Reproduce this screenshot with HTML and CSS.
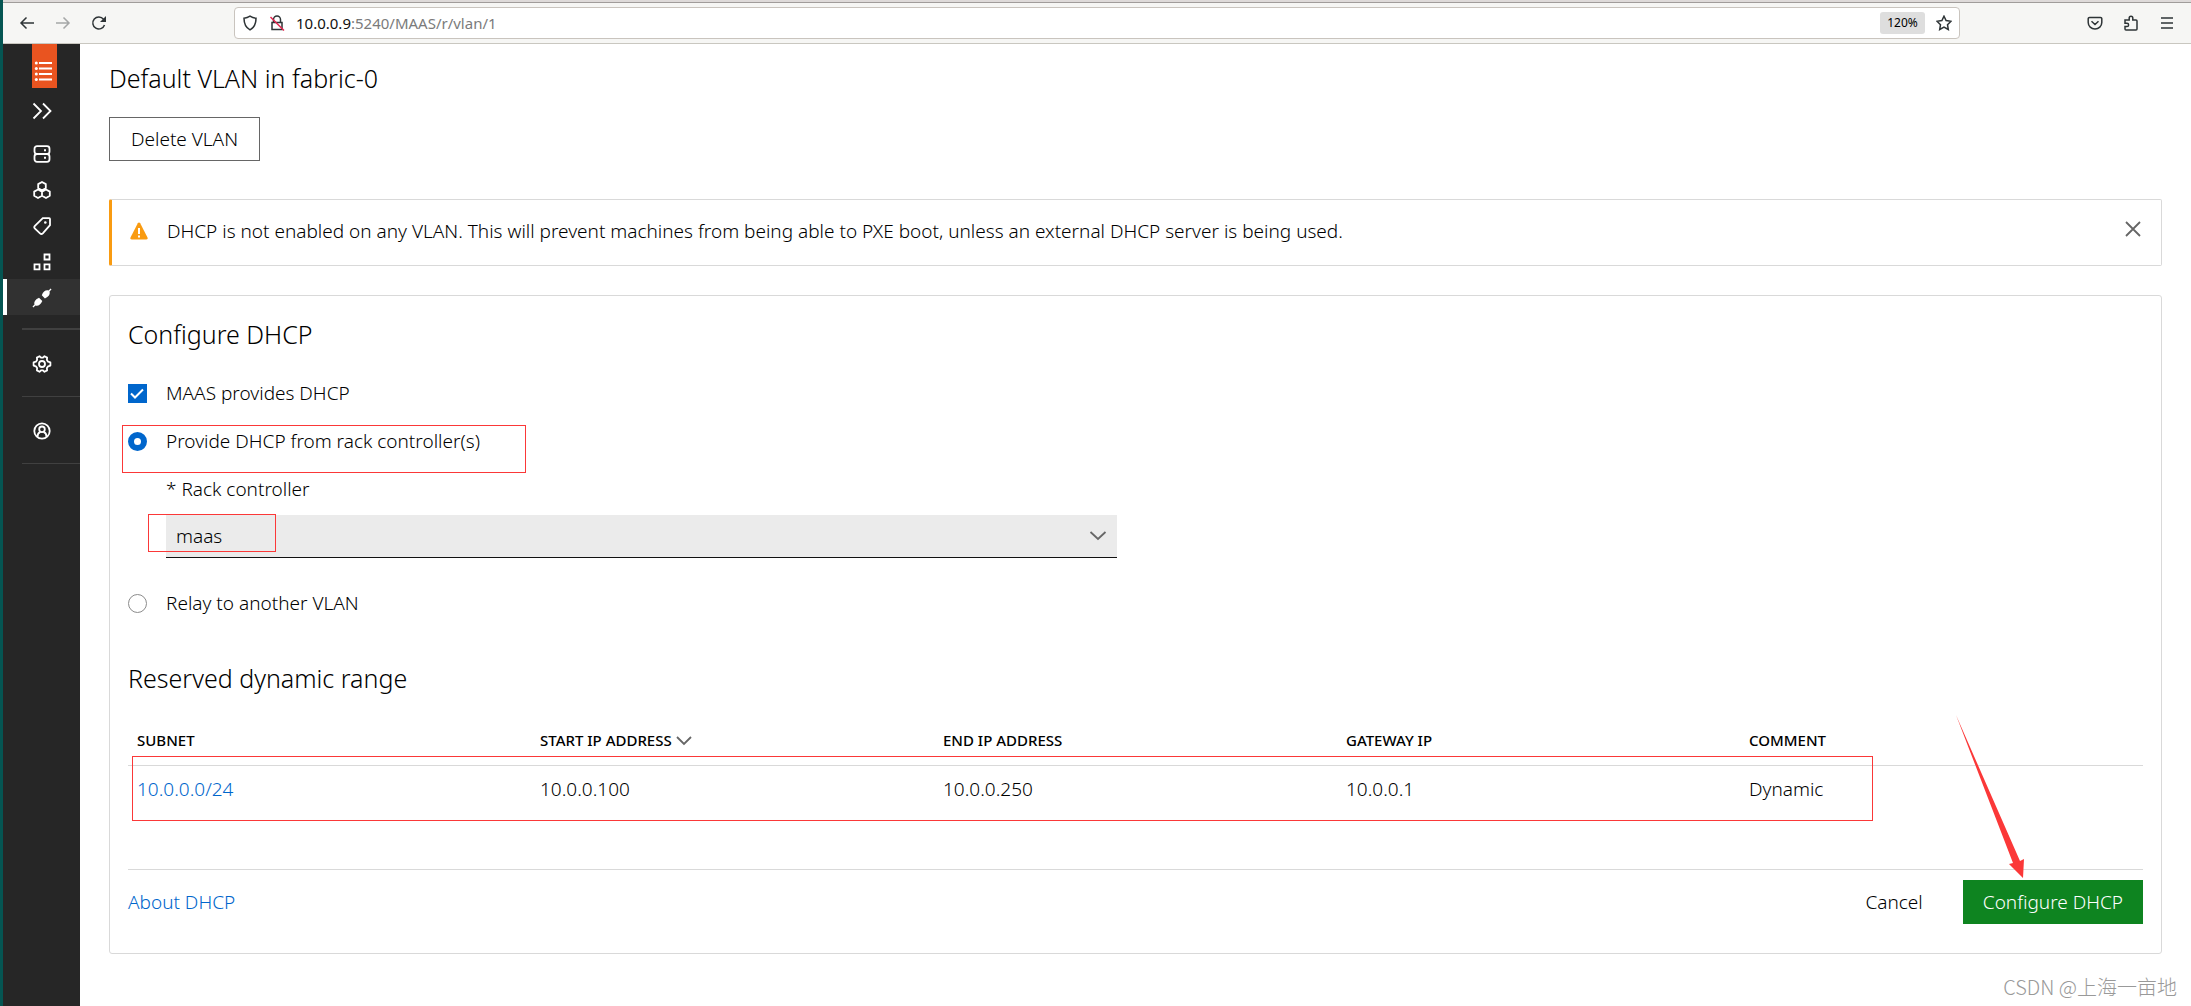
FILE: index.html
```html
<!DOCTYPE html>
<html lang="en">
<head>
<meta charset="utf-8">
<meta name="viewport" content="width=device-width, initial-scale=1">
<title>Default VLAN in fabric-0 | MAAS</title>
<link rel="stylesheet" href="styles.css">
</head>
<body>
<div class="browser">
  <header class="toolbar">
    <div class="toolbar-nav">
      <button class="tool" aria-label="Back"><svg width="16" height="16" viewBox="0 0 16 16"><path d="M15 8H2M7.500 2.500 2 8l5.500 5.500"/></svg></button>
      <button class="tool is-dim" aria-label="Forward" disabled><svg width="16" height="16" viewBox="0 0 16 16"><path d="M1 8h13M8.500 2.500 14 8l-5.500 5.500"/></svg></button>
      <button class="tool" aria-label="Reload"><svg width="16" height="16" viewBox="0 0 16 16"><path d="M13.500 10A6 6 0 1 1 12.500 4.200"/><path class="solid" d="M15 1v6H9z"/></svg></button>
    </div>
    <div class="urlbar">
      <svg width="16" height="16" viewBox="0 0 16 16"><path d="M8 1.200c1.800 1.200 3.600 1.800 6 2 0 5-1.400 9.200-6 11.600C3.400 12.400 2 8.200 2 3.200c2.400-.2 4.200-.8 6-2z"/></svg>
      <svg width="16" height="16" viewBox="0 0 16 16"><path d="M4.500 7V4.500a3.500 3.500 0 0 1 7 0V7M3 7.500h10v7H3z"/><path class="slash" d="M1.500 2 15 15.500"/></svg>
      <p class="url"><b>10.0.0.9</b>:5240/MAAS/r/vlan/1</p>
      <button class="zoom-level">120%</button>
      <button class="tool" aria-label="Bookmark this page"><svg width="16" height="16" viewBox="0 0 16 16"><path d="m8 1.200 2.100 4.400 4.900.7-3.500 3.400.8 4.800L8 12.200l-4.300 2.300.8-4.800L1 6.300l4.900-.7z"/></svg></button>
    </div>
    <div class="toolbar-menu">
      <button class="tool" aria-label="Save to Pocket"><svg width="16" height="16" viewBox="0 0 16 16"><path d="M2.500 2.500h11a1.300 1.300 0 0 1 1.300 1.300v3.700a6.800 6.500 0 0 1-13.600 0V3.800a1.300 1.300 0 0 1 1.300-1.300zM4.500 6.200 8 9.500l3.500-3.300"/></svg></button>
      <button class="tool" aria-label="Extensions"><svg width="16" height="16" viewBox="0 0 16 16"><path d="M2 5h4.200V3a1.700 1.700 0 0 1 3.600 0v2H13a1 1 0 0 1 1 1v8a1 1 0 0 1-1 1H3a1 1 0 0 1-1-1v-2.500h2a1.600 1.600 0 0 0 0-3.200H2z"/></svg></button>
      <button class="tool" aria-label="Open menu"><svg width="16" height="16" viewBox="0 0 16 16"><path d="M2 3h12M2 8h12M2 13h12"/></svg></button>
    </div>
  </header>

  <div class="app">
    <nav class="sidebar" aria-label="Main">
      <a class="logo" href="#" aria-label="MAAS"><svg width="25" height="44" viewBox="0 0 25 44"><g fill="#fff"><path d="M7 18h13v2H7zM7 23.500h13v2H7zM7 29h13v2H7zM7 34.500h13v2H7z"/><circle cx="4.300" cy="19" r="1.500"/><circle cx="4.300" cy="24.500" r="1.500"/><circle cx="4.300" cy="30" r="1.500"/><circle cx="4.300" cy="35.500" r="1.500"/></g></svg></a>
      <button class="nav-toggle" aria-label="Expand navigation"><svg width="20" height="18" viewBox="0 0 20 18"><path d="m1.500 1.500 7.500 7.500-7.500 7.500M11 1.500 18.500 9 11 16.500"/></svg></button>
      <ul class="nav-list">
        <li><a href="#" aria-label="Machines"><svg width="18" height="18" viewBox="0 0 18 18"><rect x="1.500" y="1.200" width="15" height="7.800" rx="2.500"/><rect x="1.500" y="9" width="15" height="7.800" rx="2.500"/><path class="solid" d="M11 4.200h2v2h-2zM11 11.800h2v2h-2z"/></svg></a></li>
        <li><a href="#" aria-label="Devices"><svg width="18" height="18" viewBox="0 0 18 18"><path d="M9 1 12.800 3.100v4.200L9 9.300 5.200 7.300V3.100zM5 8.500 9 10.600v4.200L5 17 1.200 14.800v-4.200zM13 8.500 9 10.600v4.200L13 17l3.800-2.200v-4.200z" stroke-linejoin="round"/></svg></a></li>
        <li><a href="#" aria-label="Tags"><svg width="18" height="18" viewBox="0 0 18 18"><path d="M9.800 1.200h6.400a.8.800 0 0 1 .8.800v6.200l-7.200 8.100a2 2 0 0 1-2.800.1l-5-4.700a2 2 0 0 1-.1-2.800z"/><circle class="solid" cx="12.300" cy="5.500" r="1.300"/></svg></a></li>
        <li><a href="#" aria-label="Pools"><svg width="18" height="18" viewBox="0 0 18 18"><path d="M11.500 1.500h5v5h-5zM11.500 11.300h5v5h-5zM1.500 11.300h5v5h-5z"/></svg></a></li>
        <li><a class="is-active" href="#" aria-label="Networking" aria-current="page"><svg width="20" height="20" viewBox="0 0 20 20"><path class="solid" d="m18.600.5.900.9-2 2.100c.9 2.700-.9 5.400-4.600 6.900L9.800 7.200C11.200 3.400 13.800 1.700 16.600 2.500zM1.400 19.500l-.9-.9 2-2.100c-.8-2.700.9-5.200 4.500-6.800l3.300 3.200c-1.500 3.700-4.200 5.400-6.900 4.600z"/></svg></a></li>
      </ul>
      <ul class="nav-list nav-group is-first">
        <li><a href="#" aria-label="Settings"><svg width="20" height="20" viewBox="0 0 20 20"><path d="M7.500 2.200 9 3.700h2l1.500-1.500 2.600 1.400-.2 2.300 1.200 1.800 2.300.7v3.200l-2.300.7-1.200 1.800.2 2.300-2.600 1.400-1.500-1.500H9l-1.500 1.500-2.600-1.400.2-2.300-1.200-1.800-2.300-.7V8.400l2.300-.7 1.200-1.800-.2-2.300z" stroke-linejoin="round"/><circle cx="10" cy="10" r="3"/></svg></a></li>
      </ul>
      <ul class="nav-list nav-group">
        <li><a href="#" aria-label="Account"><svg width="18" height="18" viewBox="0 0 18 18"><circle cx="9" cy="9" r="7.700"/><circle cx="9" cy="7.300" r="2.800"/><path d="M4.500 14.800c0-2.600 1-4.300 3-5M13.500 14.800c0-2.600-1-4.300-3-5"/></svg></a></li>
      </ul>
      <hr class="nav-end">
    </nav>

    <main class="content">
      <h1 class="heading">Default VLAN in fabric-0</h1>
      <button class="button">Delete VLAN</button>

      <div class="notice" role="status">
        <svg width="18" height="18" viewBox="0 0 18 18"><path d="M9 .5c.5 0 .9.300 1.200.8l7.300 14.200c.5 1-.1 2-1.200 2H1.700c-1.100 0-1.700-1-1.200-2L7.800 1.300C8.100.8 8.500.5 9 .5z" fill="#f99b11"/><path d="M8 6h2v6H8zM8 13.500h2v2H8z" fill="#fff"/></svg>
        <p>DHCP is not enabled on any VLAN. This will prevent machines from being able to PXE boot, unless an external DHCP server is being used.</p>
        <button class="close" aria-label="Close notification"><svg width="16" height="16" viewBox="0 0 16 16"><path d="m1 1 14 14M15 1 1 15"/></svg></button>
      </div>

      <form class="card" onsubmit="return false">
        <h2 class="heading">Configure DHCP</h2>
        <div class="options">
          <label class="option"><input class="tick" type="checkbox" checked><span>MAAS provides DHCP</span></label>
          <label class="option"><input class="dot" type="radio" name="source" checked><span>Provide DHCP from rack controller(s)</span></label>
          <div class="field">
            <label for="rack">* Rack controller</label>
            <div class="select">
              <select id="rack"><option>maas</option></select>
              <svg width="18" height="10" viewBox="0 0 18 10"><path d="m1.500 1 7.500 7 7.500-7"/></svg>
            </div>
          </div>
          <label class="option"><input class="dot" type="radio" name="source"><span>Relay to another VLAN</span></label>
        </div>

        <h2 class="heading">Reserved dynamic range</h2>
        <table class="ranges">
          <thead>
            <tr>
              <th scope="col">SUBNET</th>
              <th scope="col" aria-sort="descending">START IP ADDRESS <svg width="16" height="10" viewBox="0 0 16 10"><path d="m1 1 7 7 7-7"/></svg></th>
              <th scope="col">END IP ADDRESS</th>
              <th scope="col">GATEWAY IP</th>
              <th scope="col">COMMENT</th>
            </tr>
          </thead>
          <tbody>
            <tr>
              <td><a href="#">10.0.0.0/24</a></td>
              <td>10.0.0.100</td>
              <td>10.0.0.250</td>
              <td>10.0.0.1</td>
              <td>Dynamic</td>
            </tr>
          </tbody>
        </table>

        <footer class="actions">
          <a href="#">About DHCP</a>
          <button class="button is-base" type="button">Cancel</button>
          <button class="button is-positive">Configure DHCP</button>
        </footer>

        <span class="mark mark-source"></span>
        <span class="mark mark-rack"></span>
        <span class="mark mark-range"></span>
        <svg class="arrow" width="72" height="166" viewBox="0 0 72 166"><path d="M1 0 65 146l4-2-1 19-14-14 4-1z" fill="#fb3838"/></svg>
      </form>
    </main>
  </div>
  <p class="watermark">CSDN @上海一亩地</p>
</div>
</body>
</html>
```
FILE: styles.css
```css
* { box-sizing: border-box; }

body {
  margin: 0;
  background: #fff;
  color: #000;
  font: 300 19px/24px "Noto Sans", "Open Sans", sans-serif;
}

h1, h2, p, ul { margin: 0; padding: 0; }
ul { list-style: none; }
a { color: #06c; text-decoration: none; }
button, select { font: inherit; color: inherit; margin: 0; }
svg { display: block; flex: none; }

.browser {
  position: relative;
  display: flex;
  flex-direction: column;
  min-height: 100vh;
  border-left: 3px solid #055552;
}

/* Browser toolbar */
.toolbar {
  display: flex;
  align-items: center;
  height: 44px;
  padding: 0 16px;
  background: #f6f6f4;
  border-top: 2px solid #dedad9;
  border-bottom: 1px solid #c9c7c0;
  box-shadow: inset 0 1px #a09c9a;
}
.toolbar svg { fill: none; stroke: #2e3436; stroke-width: 1.5; }
.toolbar .solid { fill: #2e3436; stroke: none; }
.toolbar .slash { stroke: #e22850; }
.tool { display: block; padding: 0; border: 0; background: none; }
.is-dim { opacity: .4; }
.toolbar-nav { display: flex; gap: 20px; width: 215px; }
.urlbar {
  display: flex;
  align-items: center;
  gap: 11px;
  flex: 1;
  height: 32px;
  padding: 0 7px;
  border: 1px solid #c9c4be;
  border-radius: 4px;
  background: #fff;
}
.url { flex: 1; color: #7b7b7b; font-size: 15px; font-weight: 400; }
.url b { color: #111; font-weight: 400; }
.zoom-level {
  width: 45px;
  height: 22px;
  padding: 0;
  border: 0;
  border-radius: 3px;
  background: #dedede;
  font-size: 12px;
  font-weight: 400;
  line-height: 22px;
}
.toolbar-menu { display: flex; justify-content: flex-end; gap: 20px; width: 215px; }

/* Application frame */
.app { display: flex; flex: 1; }

.sidebar { width: 77px; background: #262626; }
.sidebar svg { fill: none; stroke: #fff; stroke-width: 1.800; }
.sidebar .solid, .sidebar .logo g { fill: #fff; stroke: none; }
.logo { display: block; width: 25px; margin-left: 29px; background: #e95420; }
.nav-toggle {
  display: flex;
  align-items: center;
  width: 100%;
  height: 47px;
  padding: 0 0 2px 29px;
  border: 0;
  background: none;
}
.nav-list a {
  display: flex;
  align-items: center;
  justify-content: center;
  height: 36px;
  padding: 2px 0 0;
}
.nav-list .is-active { background: #313131; box-shadow: inset 4px 0 #fff; }
.nav-group { margin-left: 19px; padding: 15px 19px 15px 0; border-top: 1px solid #404040; }
.nav-group.is-first { margin-top: 13px; border-top-width: 2px; }
.nav-end { height: 1px; margin: 0 0 0 19px; border: 0; background: #404040; }

.content { flex: 1; min-width: 0; padding: 18px 29px 51px 29px; }
.heading { font-size: 25px; font-weight: 300; line-height: 32px; }

.button {
  height: 44px;
  padding: 0 19px;
  border: 1px solid #666;
  background: #fff;
}
.content > .button { display: block; min-width: 151px; margin-top: 23px; }
.button.is-base { border-color: transparent; }
.button.is-positive { border-color: #0e8420; background: #0e8420; color: #fff; }

.notice {
  display: flex;
  align-items: center;
  gap: 19px;
  min-height: 67px;
  margin-top: 38px;
  padding: 0 20px 3px 18px;
  border: 1px solid #d9d9d9;
  border-left: 3px solid #f99b11;
  border-radius: 2px;
}
.notice p { flex: 1; }
.close { padding: 0 0 4px; border: 0; background: none; }
.close svg { fill: none; stroke: #666; stroke-width: 1.800; }

/* DHCP form */
.card {
  position: relative;
  margin-top: 29px;
  padding: 22px 18px 29px;
  border: 1px solid #d9d9d9;
  border-radius: 3px;
}
.options { display: grid; gap: 24px; margin: 31px 0 47px; }
.option { display: flex; align-items: center; gap: 19px; }
.option input { appearance: none; flex: none; width: 19px; height: 19px; margin: 0; }
.tick {
  background: #06c url("data:image/svg+xml,%3Csvg xmlns='http://www.w3.org/2000/svg' viewBox='0 0 19 19'%3E%3Cpath d='m3 9.500 4 4 8-8' fill='none' stroke='%23fff' stroke-width='2'/%3E%3C/svg%3E");
}
.dot { border: 1px solid #8c8c8c; border-radius: 50%; }
.dot:checked { border: 6px solid #06c; }
.field { display: grid; gap: 14px; width: calc(50% - 19px); padding-left: 38px; margin-bottom: 9px; }
.select { position: relative; }
.select select {
  appearance: none;
  display: block;
  width: 100%;
  height: 43px;
  padding: 0 10px;
  border: 0;
  border-bottom: 1px solid #111;
  border-radius: 0;
  background: #ebebeb;
}
.select svg { position: absolute; right: 10px; top: 16px; }
.select svg, .ranges svg { fill: none; stroke: #666; stroke-width: 1.800; }

.ranges { width: 100%; margin-top: 34px; border-collapse: collapse; table-layout: fixed; }
.ranges th, .ranges td { padding: 0 0 0 9px; text-align: left; }
.ranges th {
  height: 37px;
  padding-bottom: 12px;
  border-bottom: 1px solid #d9d9d9;
  font-size: 15px;
  font-weight: 500;
}
.ranges th svg { display: inline-block; }
.ranges td { height: 48px; }

.actions {
  display: flex;
  align-items: center;
  gap: 20px;
  margin-top: 56px;
  padding-top: 10px;
  border-top: 1px solid #d9d9d9;
}
.actions a { flex: 1; }

/* Red annotations drawn over the form */
.mark { position: absolute; border: 1px solid #fb3838; pointer-events: none; }
.mark-source { left: 12px; top: 129px; width: 404px; height: 48px; }
.mark-rack { left: 38px; top: 218px; width: 128px; height: 38px; }
.mark-range { left: 22px; right: 288px; top: 460px; height: 65px; }
.arrow { position: absolute; right: 134px; top: 419px; }

.watermark {
  position: absolute;
  right: 14px;
  bottom: 7px;
  color: #999;
  font: 300 20px/24px "Noto Sans CJK SC", sans-serif;
}
```
